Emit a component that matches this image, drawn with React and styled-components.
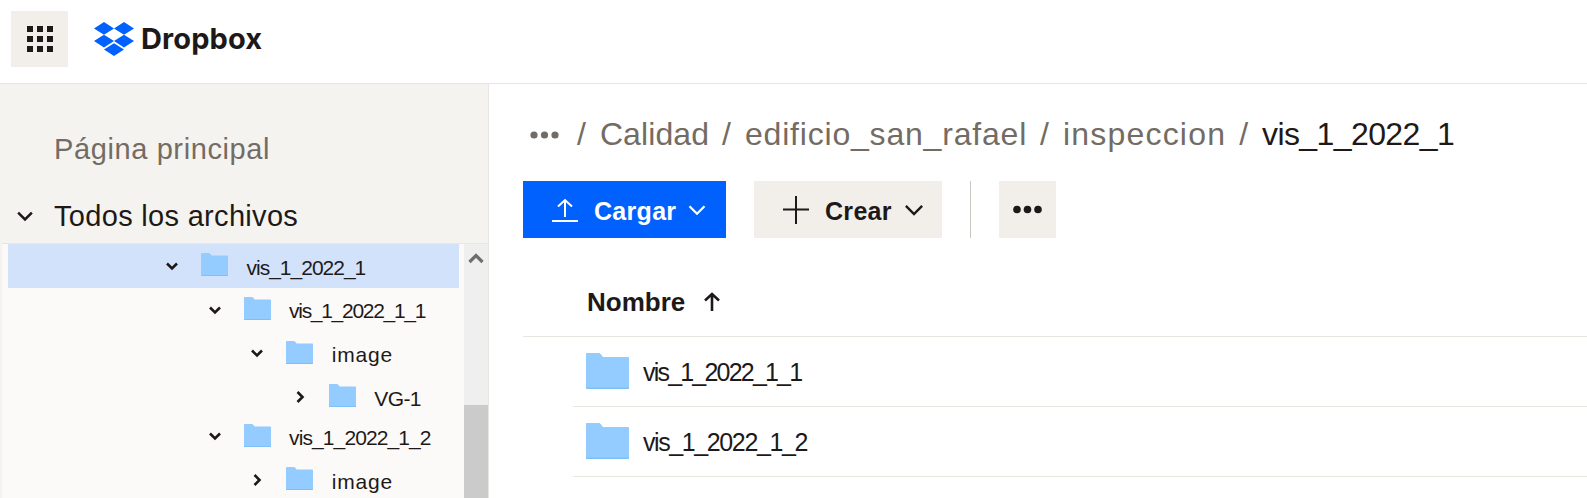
import React from 'react';
import styled, { createGlobalStyle } from 'styled-components';

const GlobalStyle = createGlobalStyle`
html, body {
  margin: 0;
  padding: 0;
  height: 100%;
  overflow: hidden;
  background: #fff;
  font-family: "Liberation Sans", Arial, sans-serif;
  color: #1e1919;
}
`;

const Page = styled.div`
width: 1587px;
height: 498px;
display: flex;
flex-direction: column;
overflow: hidden;
`;

const Header = styled.header`
height: 78px;
flex: none;
display: flex;
align-items: center;
padding: 0 0 5px 11px;
border-bottom: 1px solid #e8e6e1;
`;

const GridButton = styled.div`
width: 57px;
height: 56px;
background: #f2efea;
display: grid;
grid-template-columns: repeat(3, 6px);
grid-auto-rows: 6px;
gap: 4px;
justify-content: center;
align-content: center;
`;

const GridDot = styled.span`
background: #1e1919;
`;

const Logo = styled.div`
display: flex;
align-items: center;
margin-left: 26px;
gap: 7px;
`;

const LogoText = styled.span`
font-family: "Inter", sans-serif;
font-size: 29px;
font-weight: 700;
letter-spacing: 0.1px;
margin-top: -1px;
color: #1e1919;
`;

const Body = styled.div`
flex: 1;
display: flex;
min-height: 0;
`;

const Sidebar = styled.aside`
width: 488px;
flex: none;
background: #f5f3ef;
border-right: 1px solid #e8e6e1;
display: flex;
flex-direction: column;
padding-top: 44px;
`;

const NavItem = styled.div`
display: flex;
align-items: center;
height: 42px;
font-size: 29px;
letter-spacing: ${p => p.$spacing}px;
padding-left: 54px;
position: relative;
color: ${p => (p.$muted ? '#736c64' : '#1e1919')};
margin-bottom: ${p => p.$gap || 0}px;
`;

const NavChevron = styled.svg`
position: absolute;
left: 14px;
top: 10px;
`;

const Tree = styled.div`
flex: 1;
min-height: 0;
display: flex;
background: #fbfaf8;
border-top: 1px solid #e8e6e1;
margin-left: 2px;
padding-left: 6px;
overflow: hidden;
`;

const TreeList = styled.div`
width: 451px;
flex: none;
`;

const TreeRow = styled.div`
height: 43.7px;
display: flex;
align-items: center;
padding-left: ${p => 156 + p.$depth * 42.6}px;
margin-top: ${p => (p.$pull ? '-4.4px' : 0)};
background: ${p => (p.$selected ? '#d3e2fb' : 'transparent')};
`;

const TreeLabel = styled.span`
font-size: 21px;
letter-spacing: ${p => p.$spacing}px;
margin-top: 3.5px;
color: #1e1919;
`;

const TreeChevron = styled.svg`
width: 16px;
height: 16px;
flex: none;
`;

const TreeFolder = styled.svg`
width: 27px;
height: 23px;
flex: none;
margin: -2px 18.5px 0 21px;
`;

const Scrollbar = styled.div`
width: 24px;
margin-left: 5px;
flex: none;
background: #efefef;
display: flex;
flex-direction: column;
align-items: center;
`;

const ScrollArrow = styled.svg`
width: 16px;
height: 12px;
margin-top: 8px;
flex: none;
`;

const ScrollThumb = styled.div`
width: 100%;
margin-top: 141px;
flex: 1;
background: #cbcbcb;
`;

const Main = styled.main`
flex: 1;
min-width: 0;
padding: 30px 0 0 34px;
`;

const Breadcrumb = styled.nav`
display: flex;
align-items: center;
height: 40px;
font-size: 32px;
color: #736c64;
`;

const Dots = styled.svg`
width: 29px;
height: 8px;
margin: 2px 5px 0 7px;
flex: none;
`;

const Slash = styled.span`
margin: 0 14px 0 13px;
`;

const Crumb = styled.span`
color: ${p => (p.$current ? '#1e1919' : '#736c64')};
letter-spacing: ${p => p.$spacing}px;
`;

const Toolbar = styled.div`
display: flex;
align-items: stretch;
height: 57px;
margin-top: 27px;
gap: 28px;
`;

const Button = styled.div`
display: flex;
align-items: center;
width: ${p => p.$width}px;
padding-left: ${p => p.$pad}px;
box-sizing: border-box;
background: ${p => (p.$primary ? '#0061fe' : '#f2efea')};
color: ${p => (p.$primary ? '#fff' : '#1e1919')};
font-size: 25px;
font-weight: 700;
letter-spacing: 0.3px;
`;

const ButtonLabel = styled.span`
margin: 3px 9px 0 16px;
`;

const Divider = styled.div`
width: 1px;
background: #c9c5bf;
`;

const MoreButton = styled.div`
width: 57px;
background: #f2efea;
display: flex;
align-items: center;
justify-content: center;
`;

const TableHead = styled.div`
height: 99px;
box-sizing: border-box;
display: flex;
align-items: center;
padding: 30px 0 0 64px;
border-bottom: 1px solid #e8e6e1;
font-size: 26px;
font-weight: 700;
gap: 18px;
`;

const FileRow = styled.div`
height: 70px;
box-sizing: border-box;
margin-left: 50px;
padding-left: 13px;
display: flex;
align-items: center;
border-bottom: 1px solid #e8e6e1;
`;

const FileLabel = styled.span`
font-size: 25px;
letter-spacing: ${p => p.$spacing}px;
margin-top: 2px;
color: #1e1919;
`;

const FileFolder = styled.svg`
width: 43px;
height: 36px;
flex: none;
margin: -2px 14px 0 0;
`;

const FolderArt = () => (
  <>
    <path d="M1 0h11.5c1 0 1.6.4 2.2 1.1L17 4h25c.6 0 1 .4 1 1v30c0 .6-.4 1-1 1H1c-.6 0-1-.4-1-1V1c0-.6.4-1 1-1z" fill="#94ccff" />
    <path d="M0 34.6h43V35c0 .6-.4 1-1 1H1c-.6 0-1-.4-1-1z" fill="#7fbff7" />
  </>
);

const DownChevron = ({ color = '#1e1919', width = 2.6 }) => (
  <path d="M3 5.5 8 10.5 13 5.5" fill="none" stroke={color} strokeWidth={width} />
);

const RightChevron = () => (
  <path d="M5.5 3 10.5 8 5.5 13" fill="none" stroke="#1e1919" strokeWidth="2.6" />
);

const treeItems = [
  { name: 'vis_1_2022_1', depth: 0, open: true, selected: true, spacing: -1 },
  { name: 'vis_1_2022_1_1', depth: 1, open: true, spacing: -1.3 },
  { name: 'image', depth: 2, open: true, spacing: 0.8 },
  { name: 'VG-1', depth: 3, open: false, spacing: -0.6 },
  { name: 'vis_1_2022_1_2', depth: 1, open: true, spacing: -0.9, pull: true },
  { name: 'image', depth: 2, open: false, spacing: 0.8 },
];

const App = () => {
  return (
    <>
      <GlobalStyle />
      <Page>
        <Header>
          <GridButton>
            {Array.from({ length: 9 }).map((_, i) => <GridDot key={i} />)}
          </GridButton>
          <Logo>
            <svg width="40" height="34" viewBox="0 0 235.45 200">
              <path fill="#0061fe" d="M58.86 0L0 37.5 58.86 75l58.87-37.5zm117.73 0l-58.86 37.5L176.59 75l58.86-37.5zM0 112.5L58.86 150l58.87-37.5L58.86 75zm176.59-37.5l-58.86 37.5 58.86 37.5 58.86-37.5zM58.86 162.5l58.87 37.5 58.86-37.5-58.86-37.5z" />
            </svg>
            <LogoText>Dropbox</LogoText>
          </Logo>
        </Header>
        <Body>
          <Sidebar>
            <NavItem $muted $gap={25} $spacing={0.61}>Página principal</NavItem>
            <NavItem $gap={6} $spacing={0.31}>
              <NavChevron width="22" height="22" viewBox="0 0 16 16"><DownChevron width={1.8} /></NavChevron>
              Todos los archivos
            </NavItem>
            <Tree>
              <TreeList>
                {treeItems.map((item, i) => (
                  <TreeRow key={i} $depth={item.depth} $selected={item.selected} $pull={item.pull}>
                    <TreeChevron viewBox="0 0 16 16">
                      {item.open ? <DownChevron /> : <RightChevron />}
                    </TreeChevron>
                    <TreeFolder viewBox="0 0 43 36" preserveAspectRatio="none"><FolderArt /></TreeFolder>
                    <TreeLabel $spacing={item.spacing}>{item.name}</TreeLabel>
                  </TreeRow>
                ))}
              </TreeList>
              <Scrollbar>
                <ScrollArrow viewBox="0 0 16 12">
                  <path d="M1.5 10 8 3.5 14.5 10" fill="none" stroke="#6e6e6e" strokeWidth="3.2" />
                </ScrollArrow>
                <ScrollThumb />
              </Scrollbar>
            </Tree>
          </Sidebar>
          <Main>
            <Breadcrumb>
              <Dots viewBox="0 0 29 8">
                <circle cx="4" cy="4" r="3.6" fill="#736c64" />
                <circle cx="14.5" cy="4" r="3.6" fill="#736c64" />
                <circle cx="25" cy="4" r="3.6" fill="#736c64" />
              </Dots>
              <Slash>/</Slash>
              <Crumb $spacing={0.1}>Calidad</Crumb>
              <Slash>/</Slash>
              <Crumb $spacing={0.8}>edificio_san_rafael</Crumb>
              <Slash>/</Slash>
              <Crumb $spacing={1.2}>inspeccion</Crumb>
              <Slash>/</Slash>
              <Crumb $current $spacing={-0.6}>vis_1_2022_1</Crumb>
            </Breadcrumb>
            <Toolbar>
              <Button $primary $width={203} $pad={29}>
                <svg width="26" height="26" viewBox="0 0 26 26">
                  <path d="M13 20V3M6 9.5 13 3l7 6.5M0 24h26" fill="none" stroke="#fff" strokeWidth="2" />
                </svg>
                <ButtonLabel>Cargar</ButtonLabel>
                <svg width="24" height="24" viewBox="0 0 16 16"><DownChevron color="#fff" width={1.5} /></svg>
              </Button>
              <Button $width={188} $pad={29}>
                <svg width="26" height="28" viewBox="0 0 26 28">
                  <path d="M13 0v28M0 13.500h26" fill="none" stroke="#1e1919" strokeWidth="2" />
                </svg>
                <ButtonLabel>Crear</ButtonLabel>
                <svg width="26" height="26" viewBox="0 0 16 16"><DownChevron width={1.5} /></svg>
              </Button>
              <Divider />
              <MoreButton>
                <svg width="29" height="9" viewBox="0 0 29 9">
                  <circle cx="4" cy="4.500" r="3.800" fill="#1e1919" />
                  <circle cx="14.500" cy="4.500" r="3.800" fill="#1e1919" />
                  <circle cx="25" cy="4.500" r="3.800" fill="#1e1919" />
                </svg>
              </MoreButton>
            </Toolbar>
            <TableHead>
              Nombre
              <svg width="18" height="20" viewBox="0 0 18 20">
                <path d="M9 19V2M2 8.500 9 2l7 6.500" fill="none" stroke="#1e1919" strokeWidth="2.600" />
              </svg>
            </TableHead>
            <FileRow>
              <FileFolder viewBox="0 0 43 36"><FolderArt /></FileFolder>
              <FileLabel $spacing={-1.8}>vis_1_2022_1_1</FileLabel>
            </FileRow>
            <FileRow>
              <FileFolder viewBox="0 0 43 36"><FolderArt /></FileFolder>
              <FileLabel $spacing={-1.4}>vis_1_2022_1_2</FileLabel>
            </FileRow>
          </Main>
        </Body>
      </Page>
    </>
  );
};

export default App;
